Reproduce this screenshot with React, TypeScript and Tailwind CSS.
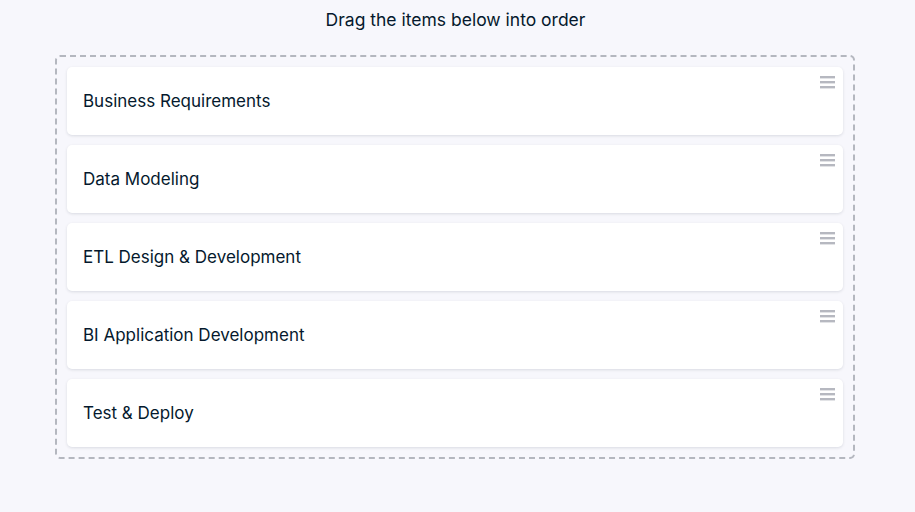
import React from "react";

const items = [
  "Business Requirements",
  "Data Modeling",
  "ETL Design & Development",
  "BI Application Development",
  "Test & Deploy",
];

function Handle() {
  return (
    <svg width="15" height="13" viewBox="0 0 15 13" className="shrink-0">
      <rect x="0" y="0" width="15" height="2.4" fill="#b6b8c0" />
      <rect x="0" y="5" width="15" height="2.4" fill="#b6b8c0" />
      <rect x="0" y="10" width="15" height="2.4" fill="#b6b8c0" />
    </svg>
  );
}

export default function App() {
  return (
    <div
      className="min-h-[512px] w-full bg-[#f7f7fc] pt-[10px] text-[#05192d]"
      style={{ fontFamily: "Inter, 'Noto Sans', sans-serif" }}
    >
      <div className="text-center text-[17.5px] leading-[20px] ml-[-4px]">
        Drag the items below into order
      </div>
      <div className="ml-[55px] mt-[25px] w-[800px] rounded-[5px] border-2 border-dashed border-[#b4b7bf] p-[10px] flex flex-col gap-[10px]">
        {items.map((t) => (
          <div
            key={t}
            className="h-[68px] rounded-[5px] bg-white shadow-[0_1px_3px_rgba(5,25,45,0.12)] flex items-start justify-between pl-[16px] pr-[8px] pt-[9px]"
          >
            <span className="mt-[13px] text-[17px] leading-[24px]">{t}</span>
            <Handle />
          </div>
        ))}
      </div>
    </div>
  );
}
